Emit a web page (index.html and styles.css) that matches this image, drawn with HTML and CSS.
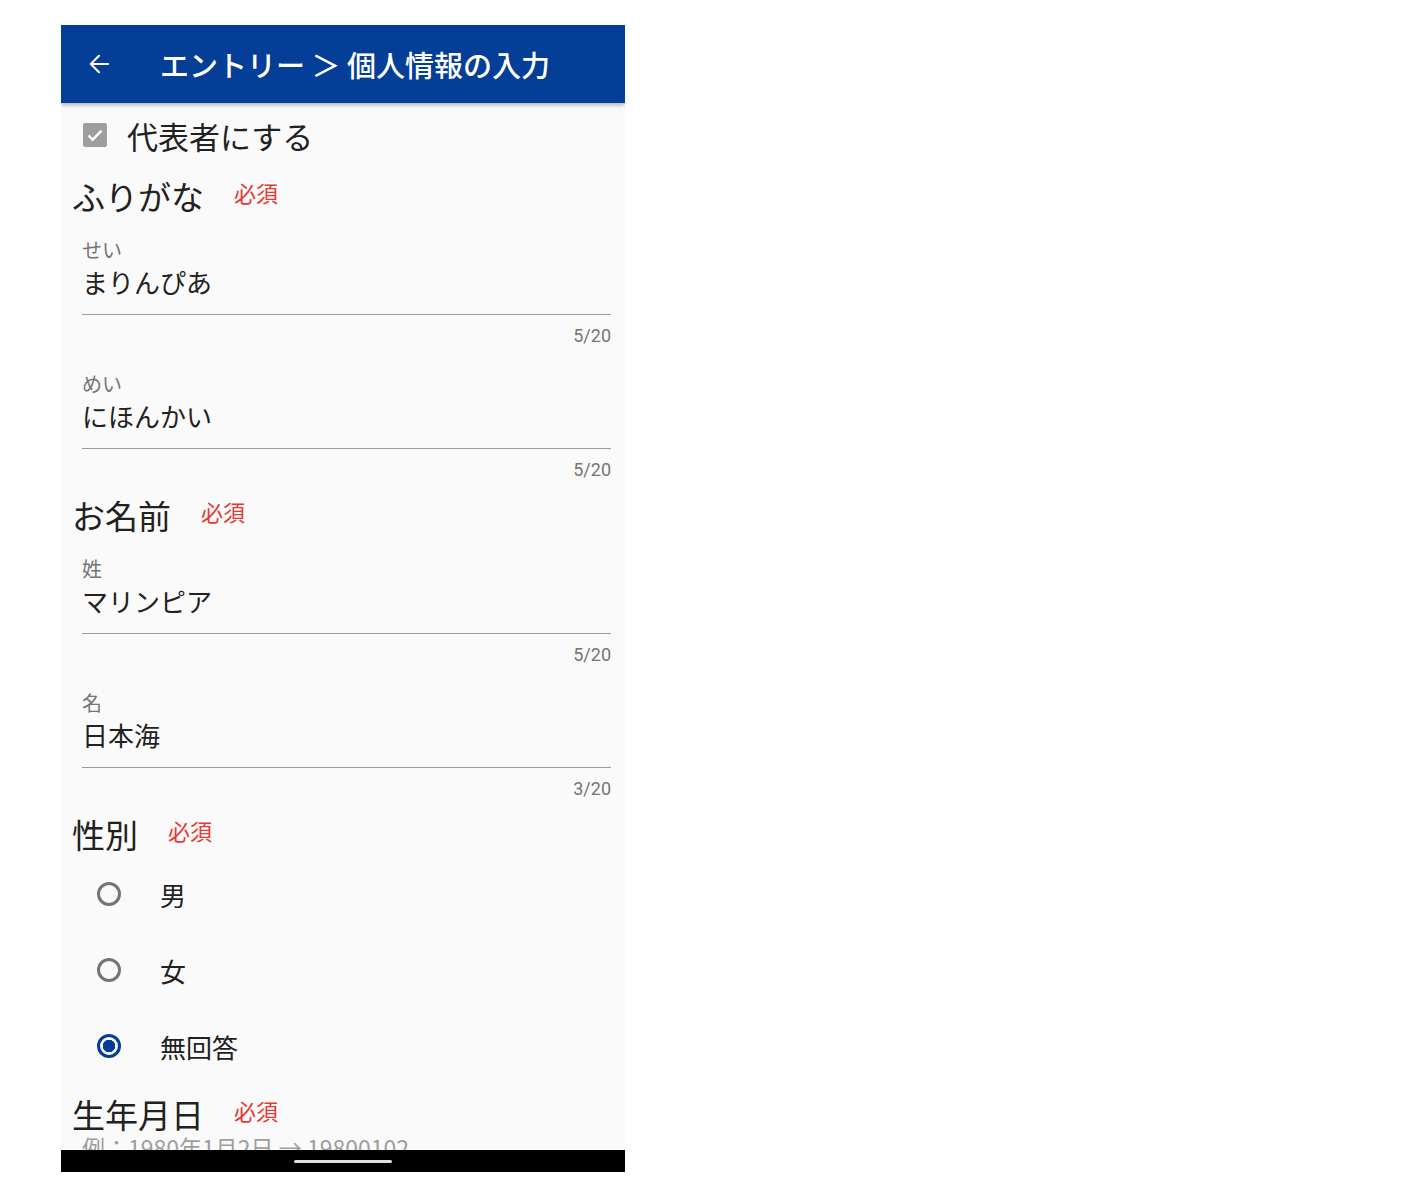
FILE: index.html
```html
<!DOCTYPE html>
<html lang="ja">
<head>
  <meta charset="UTF-8">
  <meta name="viewport" content="width=device-width, initial-scale=1">
  <title>エントリー ＞ 個人情報の入力</title>
  <link rel="stylesheet" href="styles.css">
</head>
<body>
  <div class="phone">
    <header class="appbar">
      <svg class="back" width="22" height="22" viewBox="0 0 24 24" aria-hidden="true">
        <path d="M22 12H3M12 3l-9 9 9 9" fill="none" stroke="#fff" stroke-width="2.2" stroke-linecap="round" stroke-linejoin="round"/>
      </svg>
      <h1>エントリー ＞ 個人情報の入力</h1>
    </header>

    <main class="content">
      <label class="check-row">
        <span class="checkbox">
          <svg width="24" height="24" viewBox="0 0 24 24" aria-hidden="true">
            <path d="M5.5 12.5l4.2 4.2 8.8-9" fill="none" stroke="#fff" stroke-width="2.4"/>
          </svg>
        </span>
        代表者にする
      </label>

      <section class="section">
        <h2 class="section-title"><span>ふりがな</span><span class="req">必須</span></h2>
        <div class="field">
          <div class="field-label">せい</div>
          <div class="field-input">まりんぴあ</div>
          <div class="counter">5/20</div>
        </div>
        <div class="field">
          <div class="field-label">めい</div>
          <div class="field-input">にほんかい</div>
          <div class="counter">5/20</div>
        </div>
      </section>

      <section class="section">
        <h2 class="section-title"><span>お名前</span><span class="req">必須</span></h2>
        <div class="field">
          <div class="field-label">姓</div>
          <div class="field-input">マリンピア</div>
          <div class="counter">5/20</div>
        </div>
        <div class="field">
          <div class="field-label">名</div>
          <div class="field-input">日本海</div>
          <div class="counter">3/20</div>
        </div>
      </section>

      <section class="section">
        <h2 class="section-title section-title--tight"><span>性別</span><span class="req">必須</span></h2>
        <div class="radios">
          <div class="radio-row"><span class="radio"></span>男</div>
          <div class="radio-row"><span class="radio"></span>女</div>
          <div class="radio-row"><span class="radio radio--on"></span>無回答</div>
        </div>
      </section>

      <section class="section section--wide">
        <h2 class="section-title section-title--flush"><span>生年月日</span><span class="req">必須</span></h2>
        <div class="hint">例：1980年1月2日 → 19800102</div>
      </section>
    </main>

    <div class="navbar"><span class="pill"></span></div>
  </div>
</body>
</html>
```

FILE: styles.css
```css
body {
  margin: 0;
  background: #fff;
  font-family: "Noto Sans CJK JP", "Noto Sans", sans-serif;
  color: #212121;
}
.phone {
  width: 564px;
  height: 1147px;
  margin: 25px 0 0 61px;
  background: #fafafa;
  display: flex;
  flex-direction: column;
  overflow: hidden;
}
.appbar {
  height: 78px;
  flex: none;
  background: #043e96;
  display: flex;
  align-items: center;
  padding-left: 27px;
  box-shadow: 0 2px 4px rgba(0,0,0,0.3);
  position: relative;
  z-index: 1;
}
.appbar h1 {
  margin: 0 0 0 50px;
  color: #fff;
  font-size: 29px;
  font-weight: 500;
  line-height: 1;
}
.content {
  flex: 1;
  overflow: hidden;
}
.check-row {
  display: flex;
  align-items: center;
  height: 52px;
  margin-top: 6px;
  padding-left: 22px;
  font-size: 31px;
  gap: 20px;
}
.checkbox {
  width: 24px;
  height: 24px;
  background: #9e9e9e;
  border-radius: 2px;
  display: flex;
}
.section {
  margin-top: 15px;
}
.section-title {
  display: flex;
  align-items: center;
  height: 40px;
  margin: 0 0 22px;
  padding-left: 11px;
  font-size: 33px;
  font-weight: 400;
  line-height: 40px;
}
.section-title--tight {
  margin-bottom: 12px;
}
.section-title--flush {
  margin-bottom: 0;
}
.section--wide {
  margin-top: 20px;
}
.req {
  color: #e53935;
  font-size: 22px;
  line-height: 28px;
  margin: 0 0 8px 30px;
}
.field {
  padding: 0 14px 0 21px;
  margin-bottom: 26px;
}
.field:last-child {
  margin-bottom: 0;
}
.field-label {
  font-size: 20px;
  line-height: 24px;
  color: #757575;
}
.field-input {
  font-size: 26px;
  line-height: 40px;
  padding-bottom: 12px;
  border-bottom: 1px solid #9a9a9a;
}
.counter {
  margin-top: 11px;
  font-family: Roboto, "Noto Sans CJK JP", sans-serif;
  font-size: 18px;
  line-height: 20px;
  color: #757575;
  text-align: right;
}
.radios {
  display: flex;
  flex-direction: column;
  gap: 20px;
}
.radio-row {
  height: 56px;
  display: flex;
  align-items: center;
  padding-left: 36px;
  gap: 39px;
  font-size: 26px;
}
.radio {
  width: 24px;
  height: 24px;
  box-sizing: border-box;
  border: 3px solid #757575;
  border-radius: 50%;
}
.radio--on {
  border-color: #043e96;
  background: radial-gradient(circle, #043e96 0 6px, transparent 6.5px);
}
.hint {
  padding-left: 21px;
  font-size: 23px;
  line-height: 26px;
  color: #9e9e9e;
}
.navbar {
  height: 22px;
  flex: none;
  background: #000;
  display: flex;
  justify-content: center;
  align-items: center;
}
.pill {
  width: 98px;
  height: 3px;
  border-radius: 2px;
  background: #e0e0e0;
}
```
